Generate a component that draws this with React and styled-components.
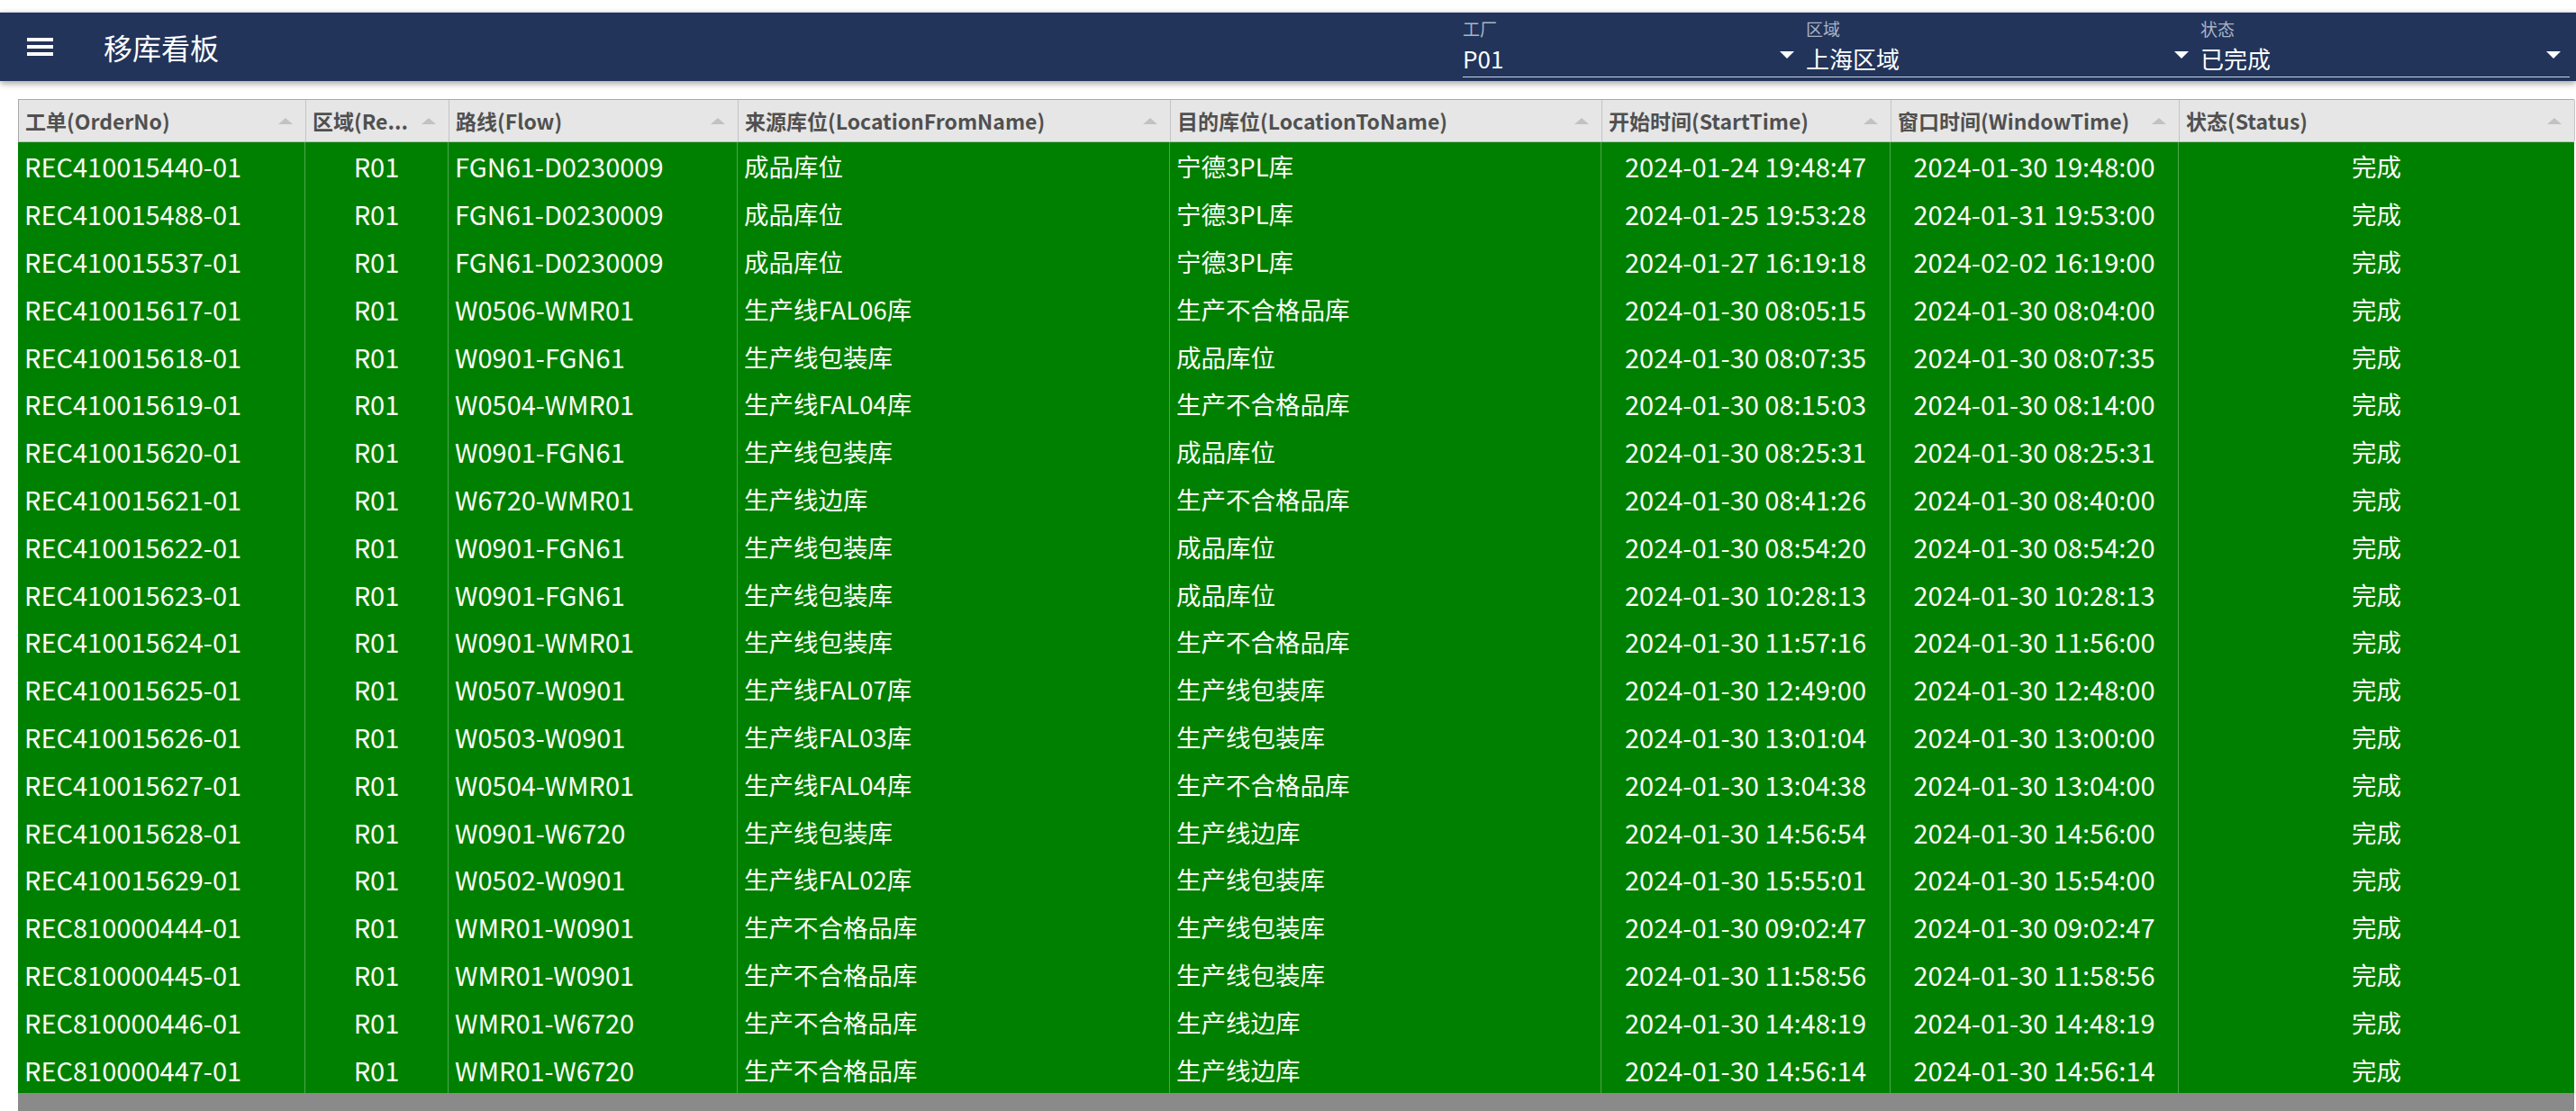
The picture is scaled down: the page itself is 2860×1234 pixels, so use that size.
import React from "react";
import styled, { createGlobalStyle } from "styled-components";

const GlobalStyle = createGlobalStyle`
  html, body { margin: 0; padding: 0; background: #ffffff; }
  body {
    font-family: "Noto Sans CJK SC", "Noto Sans", sans-serif;
    overflow: hidden;
  }
  * { box-sizing: border-box; }
`;

const COLS = "319px 159px 321px 480px 479px 321px 320px 439px";

const Page = styled.div`
  width: 2860px;
  height: 1234px;
  padding-top: 13px;
  display: flex;
  flex-direction: column;
  overflow: hidden;
`;

const AppBar = styled.header`
  position: relative;
  z-index: 2;
  height: 77px;
  flex: none;
  background: #22345a;
  border-top: 1px solid #d5dbe6;
  display: flex;
  align-items: center;
  padding-left: 30px;
  box-shadow: 0 3px 7px rgba(0, 0, 0, 0.35);
  color: #ffffff;
`;

const MenuButton = styled.button`
  border: 0;
  background: transparent;
  padding: 0;
  width: 29px;
  height: 22px;
  display: flex;
  cursor: pointer;
`;

const Title = styled.h1`
  margin: 0 0 0 56px;
  font-family: "Noto Sans CJK SC", sans-serif;
  font-weight: 400;
  font-size: 32px;
  line-height: 1;
`;

const Filters = styled.div`
  margin-left: auto;
  margin-right: 7px;
  align-self: flex-end;
  margin-bottom: 4px;
  display: flex;
  gap: 13px;
  border-bottom: 1px solid #c9d1e2;
`;

const Field = styled.div`
  width: ${(p) => p.$w}px;
  padding-right: ${(p) => p.$pr || 0}px;
  display: flex;
  flex-direction: column;
`;

const FieldLabel = styled.span`
  font-size: 19px;
  line-height: 22px;
  padding-bottom: 2px;
  color: #aab3c6;
`;

const FieldValueRow = styled.div`
  display: flex;
  align-items: center;
  justify-content: space-between;
  height: 40px;
`;

const FieldValue = styled.span`
  font-size: 26px;
  color: #ffffff;
  line-height: 1;
`;

const Caret = styled.span`
  width: 0;
  height: 0;
  border-left: 8px solid transparent;
  border-right: 8px solid transparent;
  border-top: 8px solid #ffffff;
  margin-bottom: 8px;
`;

const Grid = styled.div`
  margin: 20px 2px 0 20px;
  flex: 1;
  display: flex;
  flex-direction: column;
  min-height: 0;
`;

const HeaderRow = styled.div`
  display: grid;
  grid-template-columns: ${COLS};
  height: 48px;
  flex: none;
  background: #e6e6e6;
  border-top: 1px solid #a9a9a9;
  border-left: 1px solid #a9a9a9;
  border-bottom: 1px solid #bdbdbd;
`;

const HeaderCell = styled.div`
  display: flex;
  align-items: center;
  gap: 8px;
  padding: 0 14px 0 7px;
  border-right: 1px solid #c4c4c4;
  font-weight: 700;
  font-size: 23px;
  color: #505050;
  min-width: 0;
`;

const HeaderText = styled.span`
  flex: 1;
  min-width: 0;
  white-space: nowrap;
`;

const SortIcon = styled.span`
  flex: none;
  width: 0;
  height: 0;
  border-left: 8px solid transparent;
  border-right: 8px solid transparent;
  border-bottom: 7px solid #c2c2c2;
`;

const Body = styled.div`
  display: flex;
  flex-direction: column;
  flex: none;
  background: #008000;
`;

const Row = styled.div`
  display: grid;
  grid-template-columns: ${COLS};
  height: 52.8px;
  flex: none;
`;

const Cell = styled.div`
  display: flex;
  align-items: center;
  justify-content: ${(p) => (p.$align === "center" ? "center" : "flex-start")};
  padding: 0 7px;
  border-right: 1px solid rgba(255, 255, 255, 0.3);
  color: #fbfff5;
  font-size: ${(p) => (p.$latin ? 29 : 27.5)}px;
  white-space: nowrap;
  overflow: hidden;
  &:last-child { border-right: 0; }
`;

const Filler = styled.div`
  flex: 1;
  background: #8a8a8a;
`;

const columns = [
  { key: "order", title: "工单(OrderNo)", align: "left", latin: true },
  { key: "region", title: "区域(Re...", align: "center", latin: true },
  { key: "flow", title: "路线(Flow)", align: "left", latin: true },
  { key: "from", title: "来源库位(LocationFromName)", align: "left" },
  { key: "to", title: "目的库位(LocationToName)", align: "left" },
  { key: "start", title: "开始时间(StartTime)", align: "center", latin: true },
  { key: "window", title: "窗口时间(WindowTime)", align: "center", latin: true },
  { key: "status", title: "状态(Status)", align: "center" },
];

const raw = [
  ["REC410015440-01", "FGN61-D0230009", "成品库位", "宁德3PL库", "2024-01-24 19:48:47", "2024-01-30 19:48:00"],
  ["REC410015488-01", "FGN61-D0230009", "成品库位", "宁德3PL库", "2024-01-25 19:53:28", "2024-01-31 19:53:00"],
  ["REC410015537-01", "FGN61-D0230009", "成品库位", "宁德3PL库", "2024-01-27 16:19:18", "2024-02-02 16:19:00"],
  ["REC410015617-01", "W0506-WMR01", "生产线FAL06库", "生产不合格品库", "2024-01-30 08:05:15", "2024-01-30 08:04:00"],
  ["REC410015618-01", "W0901-FGN61", "生产线包装库", "成品库位", "2024-01-30 08:07:35", "2024-01-30 08:07:35"],
  ["REC410015619-01", "W0504-WMR01", "生产线FAL04库", "生产不合格品库", "2024-01-30 08:15:03", "2024-01-30 08:14:00"],
  ["REC410015620-01", "W0901-FGN61", "生产线包装库", "成品库位", "2024-01-30 08:25:31", "2024-01-30 08:25:31"],
  ["REC410015621-01", "W6720-WMR01", "生产线边库", "生产不合格品库", "2024-01-30 08:41:26", "2024-01-30 08:40:00"],
  ["REC410015622-01", "W0901-FGN61", "生产线包装库", "成品库位", "2024-01-30 08:54:20", "2024-01-30 08:54:20"],
  ["REC410015623-01", "W0901-FGN61", "生产线包装库", "成品库位", "2024-01-30 10:28:13", "2024-01-30 10:28:13"],
  ["REC410015624-01", "W0901-WMR01", "生产线包装库", "生产不合格品库", "2024-01-30 11:57:16", "2024-01-30 11:56:00"],
  ["REC410015625-01", "W0507-W0901", "生产线FAL07库", "生产线包装库", "2024-01-30 12:49:00", "2024-01-30 12:48:00"],
  ["REC410015626-01", "W0503-W0901", "生产线FAL03库", "生产线包装库", "2024-01-30 13:01:04", "2024-01-30 13:00:00"],
  ["REC410015627-01", "W0504-WMR01", "生产线FAL04库", "生产不合格品库", "2024-01-30 13:04:38", "2024-01-30 13:04:00"],
  ["REC410015628-01", "W0901-W6720", "生产线包装库", "生产线边库", "2024-01-30 14:56:54", "2024-01-30 14:56:00"],
  ["REC410015629-01", "W0502-W0901", "生产线FAL02库", "生产线包装库", "2024-01-30 15:55:01", "2024-01-30 15:54:00"],
  ["REC810000444-01", "WMR01-W0901", "生产不合格品库", "生产线包装库", "2024-01-30 09:02:47", "2024-01-30 09:02:47"],
  ["REC810000445-01", "WMR01-W0901", "生产不合格品库", "生产线包装库", "2024-01-30 11:58:56", "2024-01-30 11:58:56"],
  ["REC810000446-01", "WMR01-W6720", "生产不合格品库", "生产线边库", "2024-01-30 14:48:19", "2024-01-30 14:48:19"],
  ["REC810000447-01", "WMR01-W6720", "生产不合格品库", "生产线边库", "2024-01-30 14:56:14", "2024-01-30 14:56:14"],
];

const rows = raw.map(([order, flow, from, to, start, window]) => ({
  order,
  region: "R01",
  flow,
  from,
  to,
  start,
  window,
  status: "完成",
}));

function MenuIcon() {
  return (
    <svg width="29" height="22" viewBox="0 0 29 22" aria-hidden="true">
      <rect x="0" y="1" width="29" height="4" fill="#ffffff" />
      <rect x="0" y="9" width="29" height="4" fill="#ffffff" />
      <rect x="0" y="17" width="29" height="4" fill="#ffffff" />
    </svg>
  );
}

const filters = [
  { label: "工厂", value: "P01", w: 368 },
  { label: "区域", value: "上海区域", w: 425 },
  { label: "状态", value: "已完成", w: 410, pr: 10 },
];

export default function App() {
  return (
    <>
      <GlobalStyle />
      <Page>
        <AppBar>
          <MenuButton aria-label="menu">
            <MenuIcon />
          </MenuButton>
          <Title>移库看板</Title>
          <Filters>
            {filters.map((f) => (
              <Field key={f.label} $w={f.w} $pr={f.pr}>
                <FieldLabel>{f.label}</FieldLabel>
                <FieldValueRow>
                  <FieldValue>{f.value}</FieldValue>
                  <Caret />
                </FieldValueRow>
              </Field>
            ))}
          </Filters>
        </AppBar>
        <Grid>
          <HeaderRow>
            {columns.map((c) => (
              <HeaderCell key={c.key}>
                <HeaderText>{c.title}</HeaderText>
                <SortIcon />
              </HeaderCell>
            ))}
          </HeaderRow>
          <Body>
            {rows.map((r) => (
              <Row key={r.order}>
                {columns.map((c) => (
                  <Cell key={c.key} $align={c.align} $latin={c.latin}>
                    {r[c.key]}
                  </Cell>
                ))}
              </Row>
            ))}
          </Body>
          <Filler />
        </Grid>
      </Page>
    </>
  );
}
